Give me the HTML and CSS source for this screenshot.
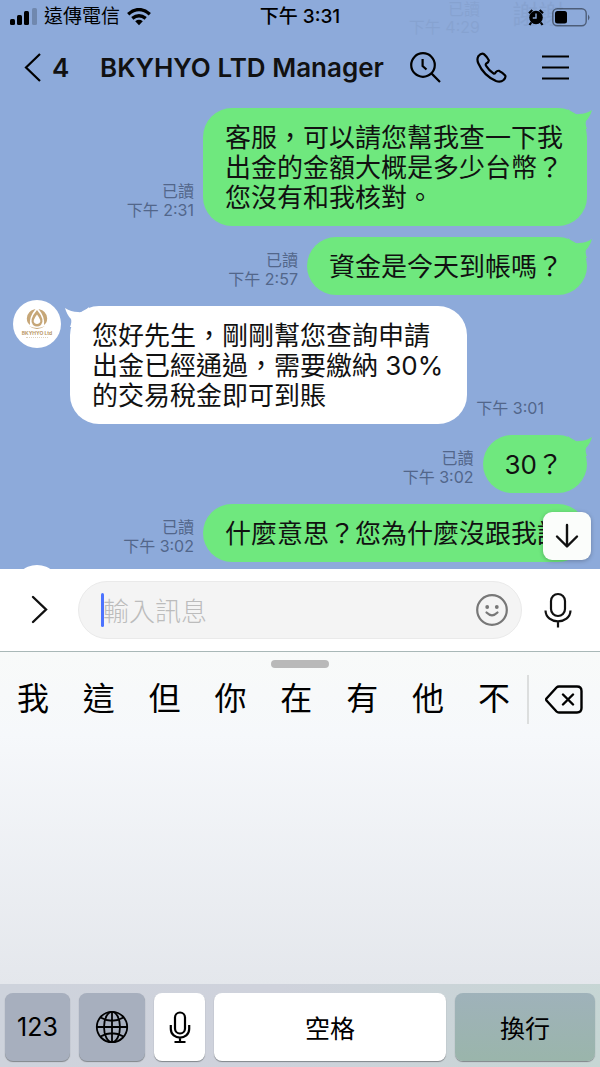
FILE: index.html
```html
<!DOCTYPE html>
<html lang="zh-Hant-TW">
<head>
<meta charset="utf-8">
<meta name="viewport" content="width=device-width, initial-scale=1">
<title>BKYHYO LTD Manager</title>
<link rel="stylesheet" href="styles.css">
</head>
<body>
<svg class="defs" width="0" height="0" aria-hidden="true">
  <symbol id="tail" viewBox="0 0 24 20"><path d="M0 0 Q5 6 11 5 Q18 5 24 1 Q22 8 18 12 Q17 15 19 20 L0 20 Z" fill="currentColor"/></symbol>
</svg>
<div class="phone">
  <header class="top">
    <div class="status">
      <div class="status-left">
        <svg width="27" height="18" viewBox="0 0 27 18" aria-hidden="true">
          <rect x="0" y="11" width="5" height="6" rx="1.5"/><rect x="7" y="7" width="5" height="10" rx="1.5"/><rect x="14" y="3" width="5" height="14" rx="1.5"/><rect x="22" y="0" width="5" height="17" rx="1.5" opacity=".2"/>
        </svg>
        <span>遠傳電信</span>
        <svg width="24" height="18" viewBox="0 0 24 18" fill="none" stroke="#000" stroke-width="3.4" aria-hidden="true">
          <path d="M1.2 6.2Q12-3 22.8 6.2"/><path d="M5.3 10.4Q12 5 18.7 10.4"/><path d="M8.2 13.3Q12 10.4 15.8 13.3L12 17.2Z" fill="#000" stroke="none"/>
        </svg>
      </div>
      <time class="clock">下午 3:31</time>
      <div class="status-right">
        <svg width="16" height="17" viewBox="0 0 16 17" aria-hidden="true">
          <circle cx="8" cy="8.5" r="6.8"/><path d="M1 4.2 4.3 1M15 4.2 11.7 1M3.2 13.5 1.5 16M12.8 13.5 14.5 16" stroke="#000" stroke-width="2.2"/><path d="M8 4.5V9H4.8" fill="none" stroke="#8daada" stroke-width="1.4"/>
        </svg>
        <svg width="38" height="19" viewBox="0 0 38 19" aria-hidden="true">
          <rect x=".8" y=".8" width="33.4" height="17" rx="4.5" fill="none" stroke="#000" stroke-opacity=".45" stroke-width="1.4"/><rect x="3" y="3" width="12" height="12.6" rx="2.5"/><path d="M36 6.5q3 3 0 6Z" opacity=".45"/>
        </svg>
      </div>
      <div class="ghost" aria-hidden="true"><p>已讀<br>下午 4:29</p><b>謝謝</b></div>
    </div>
    <nav class="nav">
      <button class="back" aria-label="返回">
        <svg width="17" height="29" viewBox="0 0 17 29" fill="none" stroke="#000" stroke-width="2.2"><path d="M16 1 2 14.5 16 28"/></svg>
        <span>4</span>
      </button>
      <h1>BKYHYO LTD Manager</h1>
      <div class="tools">
        <button aria-label="搜尋">
          <svg width="31" height="31" viewBox="0 0 31 31" fill="none" stroke="#000" stroke-width="2.2"><circle cx="13" cy="13" r="11.8"/><path d="M21.4 21.4 30 30M12.6 7V14L16.5 17.5"/></svg>
        </button>
        <button aria-label="通話">
          <svg width="31" height="31" viewBox="0 0 31 31" fill="none" stroke="#000" stroke-width="2.2" stroke-linejoin="round"><path d="M2.3 4.2Q5.5.6 8 2.2Q11 4.8 12.8 8.2Q13.2 10 10 11.8Q9.3 13 10.5 14.3Q13 18.3 17.4 21.4Q19 22 19.7 20.3Q21.5 18.3 23.2 18.9Q26.5 20.4 29.2 23.4Q30.2 25.3 27.6 28Q24.5 30.8 20 29Q7.5 23.3 2.3 11.2Q.6 7.4 2.3 4.2Z"/></svg>
        </button>
        <button aria-label="選單">
          <svg width="27" height="25" viewBox="0 0 27 25" stroke="#000" stroke-width="2.2"><path d="M0 1.5H27M0 12.5H27M0 23.5H27"/></svg>
        </button>
      </div>
    </nav>
  </header>

  <main class="chat">
    <article class="msg mine">
      <p class="meta">已讀<br>下午 2:31</p>
      <div class="bubble">客服，可以請您幫我查一下我<br>出金的金額大概是多少台幣？<br>您沒有和我核對。<svg class="tail" aria-hidden="true"><use href="#tail"/></svg></div>
    </article>
    <article class="msg mine">
      <p class="meta">已讀<br>下午 2:57</p>
      <div class="bubble">資金是今天到帳嗎？<svg class="tail" aria-hidden="true"><use href="#tail"/></svg></div>
    </article>
    <article class="msg theirs">
      <div class="avatar">
        <svg width="24" height="22" viewBox="0 0 24 22" fill="#c6a677" aria-hidden="true">
          <path d="M10.5 1Q2 3 1.8 10.5Q2 15 5 17Q3.8 9 10.5 1ZM13.5 1Q22 3 22.2 10.5Q22 15 19 17Q20.2 9 13.5 1Z"/>
          <path d="M12 2Q3.5 12 8 17Q12 20 16 17Q20.5 12 12 2ZM12 6.5Q17 13 14.5 15Q12 17 9.5 15Q7 13 12 6.5Z" fill-rule="evenodd"/>
          <path d="M4 18Q12 22 20 18Q12 24 4 18Z"/>
        </svg>
        <b>BKYHYO Ltd</b>
        <i></i>
      </div>
      <div class="bubble">您好先生，剛剛幫您查詢申請<br>出金已經通過，需要繳納 30%<br>的交易稅金即可到賬<svg class="tail" aria-hidden="true"><use href="#tail"/></svg></div>
      <p class="meta">下午 3:01</p>
    </article>
    <article class="msg mine">
      <p class="meta">已讀<br>下午 3:02</p>
      <div class="bubble">30？<svg class="tail" aria-hidden="true"><use href="#tail"/></svg></div>
    </article>
    <article class="msg mine">
      <p class="meta">已讀<br>下午 3:02</p>
      <div class="bubble">什麼意思？您為什麼沒跟我說</div>
    </article>
    <article class="msg theirs next"><div class="avatar"></div></article>
    <button class="jump" aria-label="最新訊息">
      <svg width="24" height="26" viewBox="0 0 24 26" fill="none" stroke="#111" stroke-width="2.4" stroke-linecap="round" stroke-linejoin="round"><path d="M12 2V23M2 13.5 12 23.5 22 13.5"/></svg>
    </button>
  </main>

  <form class="composer">
    <button type="button" aria-label="展開">
      <svg width="17" height="29" viewBox="0 0 17 29" fill="none" stroke="#111" stroke-width="2.4" stroke-linecap="round"><path d="M2 2 15 14.5 2 27"/></svg>
    </button>
    <div class="field">
      <span class="caret"></span>
      <input type="text" placeholder="輸入訊息" aria-label="輸入訊息">
      <button type="button" aria-label="表情貼">
        <svg width="34" height="34" viewBox="0 0 34 34" fill="none" stroke="#777" stroke-width="2.2"><circle cx="17" cy="17" r="14.8"/><path d="M11.5 19.5Q17 25 22.5 19.5" stroke-linecap="round"/><g fill="#777" stroke="none"><circle cx="12.2" cy="14" r="1.9"/><circle cx="21.8" cy="14" r="1.9"/></g></svg>
      </button>
    </div>
    <button type="button" aria-label="語音訊息">
      <svg width="28" height="36" viewBox="0 0 28 36" fill="none" stroke="#111" stroke-width="2.2"><rect x="7" y="2" width="14" height="22" rx="7"/><path d="M1.5 18.5C2 33 26 33 26.5 18.5M14 29.500V35.500"/></svg>
    </button>
  </form>

  <section class="keyboard">
    <div class="grip"></div>
    <div class="candidates">
      <button>我</button><button>這</button><button>但</button><button>你</button><button>在</button><button>有</button><button>他</button><button>不</button>
      <button class="delete" aria-label="刪除">
        <svg width="38" height="29" viewBox="0 0 38 29" fill="none" stroke="#000" stroke-width="2.4" stroke-linejoin="round" stroke-linecap="round"><path d="M14 1.5H32Q36.5 1.5 36.5 6V23Q36.5 27.5 32 27.5H14Q12.5 27.5 11.5 26.5L1.5 15.5Q.8 14.5 1.5 13.5L11.5 2.5Q12.5 1.5 14 1.5ZM18 9.5 28 19.5M28 9.5 18 19.5"/></svg>
      </button>
    </div>
    <div class="keys">
      <button class="gray">123</button>
      <button class="gray" aria-label="語言">
        <svg width="34" height="34" viewBox="0 0 34 34" fill="none" stroke="#000" stroke-width="1.8"><circle cx="17" cy="17" r="15.2"/><ellipse cx="17" cy="17" rx="8" ry="15.2"/><path d="M17 1.8V32.2M1.8 17H32.2M5.5 7.5Q17 14 28.5 7.5M5.5 26.5Q17 20 28.5 26.5"/></svg>
      </button>
      <button aria-label="聽寫">
        <svg width="22" height="33" viewBox="0 0 22 33" fill="none" stroke="#000" stroke-width="2.2"><rect x="6" y="1.5" width="10" height="21" rx="5"/><path d="M1.8 14V18C2 29.5 20 29.5 20.2 18V14M11 26.5V31M5.5 31H16.5"/></svg>
      </button>
      <button>空格</button>
      <button class="return">換行</button>
    </div>
  </section>
</div>
</body>
</html>
```
FILE: styles.css
```css
* { box-sizing: border-box; }

body {
  margin: 0;
  font-family: Inter, "Noto Sans CJK TC", sans-serif;
  color: #111;
}

button {
  margin: 0;
  padding: 0;
  border: 0;
  background: none;
  color: inherit;
  font: inherit;
}

svg { display: block; flex: none; }
p, h1 { margin: 0; }
.defs { position: absolute; }

.phone {
  display: flex;
  flex-direction: column;
  height: 100vh;
  overflow: hidden;
  background: #8daada;
}

/* Status bar and title bar */
.status {
  position: relative;
  display: grid;
  grid-template-columns: 1fr auto 1fr;
  align-items: center;
  height: 34px;
  padding: 0 10px;
  font-size: 19px;
  line-height: 34px;
  color: #000;
}
.status-left, .status-right { display: flex; align-items: center; gap: 8px; }
.status-left { gap: 7px; }
.status-right { justify-content: flex-end; }
.clock { font-weight: 500; }

.ghost {
  position: absolute;
  top: 0;
  right: 36px;
  display: flex;
  gap: 32px;
  font-size: 16px;
  line-height: 18px;
  text-align: right;
  white-space: nowrap;
  opacity: .04;
}
.ghost b { font-size: 26px; font-weight: 400; line-height: 30px; }

.nav {
  display: flex;
  align-items: center;
  height: 69px;
  padding: 0 31px 2px 24px;
}
.back {
  display: flex;
  align-items: center;
  gap: 11px;
  width: 76px;
  font-size: 26px;
  font-weight: 600;
}
.nav h1 { font-size: 26px; font-weight: 600; white-space: nowrap; }
.tools {
  display: flex;
  align-items: center;
  gap: 35px;
  margin-left: auto;
}

/* Conversation */
.chat {
  position: relative;
  display: flex;
  flex: 1;
  flex-direction: column;
  gap: 11px;
  min-height: 0;
  padding: 5px 13px 0;
  overflow: hidden;
}
.msg { display: flex; flex: none; align-items: flex-end; gap: 9px; }
.mine { justify-content: flex-end; }

.bubble {
  position: relative;
  padding: 15px 24px 13px 22px;
  border-radius: 29px;
  background: #6fe87e;
  font-size: 26px;
  line-height: 30px;
  white-space: nowrap;
}
.theirs .bubble { background: #fff; }

.tail {
  position: absolute;
  top: 1px;
  right: -5px;
  width: 24px;
  height: 20px;
  color: #6fe87e;
}
.theirs .tail {
  right: auto;
  left: -5px;
  color: #fff;
  transform: scaleX(-1);
}

.meta {
  padding-bottom: 6px;
  color: #52668a;
  font-size: 16px;
  line-height: 19px;
  text-align: right;
  white-space: nowrap;
}

.avatar {
  display: flex;
  flex: none;
  flex-direction: column;
  align-items: center;
  align-self: flex-start;
  width: 48px;
  height: 48px;
  margin-top: -6px;
  padding-top: 8px;
  border-radius: 50%;
  background: #fff;
  color: #b99866;
}
.avatar b { font-size: 5px; line-height: 7px; white-space: nowrap; }
.avatar i { width: 22px; border-top: 1px dotted #dfd2bd; }
.next .avatar { margin-top: -8px; }

.jump {
  position: absolute;
  right: 9px;
  bottom: 9px;
  display: grid;
  place-items: center;
  width: 48px;
  height: 48px;
  border-radius: 9px;
  background: #fbfdfb;
  box-shadow: 0 1px 4px rgba(0, 0, 0, .25);
}

/* Message composer */
.composer {
  display: flex;
  align-items: center;
  height: 82px;
  padding: 0 28px 0 31px;
  background: #fff;
}
.field {
  position: relative;
  display: flex;
  flex: 1;
  align-items: center;
  min-width: 0;
  height: 58px;
  margin: 0 22px 0 30px;
  padding: 0 12px 0 24px;
  border: 1px solid #eaeaea;
  border-radius: 29px;
  background: #f4f4f4;
}
.field input {
  flex: 1;
  min-width: 0;
  padding: 3px 0 0;
  border: 0;
  outline: 0;
  background: none;
  font: inherit;
  font-size: 26px;
}
.field input::placeholder { color: #bcbcbc; font-weight: 300; opacity: 1; }
.caret {
  position: absolute;
  left: 22px;
  width: 3px;
  height: 34px;
  border-radius: 2px;
  background: #4c73ff;
}

/* Keyboard */
.keyboard {
  display: flex;
  flex: none;
  flex-direction: column;
  height: 39vh;
  border-top: 1px solid #a9b8b7;
  background: linear-gradient(#f8faf9, #f6f8fb 20%, #e4e7ec 80%);
  color: #000;
}
.grip {
  align-self: center;
  width: 58px;
  height: 8px;
  margin: 8px 0 7px;
  border-radius: 4px;
  background: #b9b9b9;
}
.candidates {
  display: grid;
  grid-template-columns: repeat(8, 9fr) 10fr;
  height: 49px;
  font-size: 32px;
  line-height: 48px;
}
.delete {
  display: grid;
  place-items: center;
  border-left: 2px solid #dcdede;
}
.keys {
  display: grid;
  grid-template-columns: 65fr 66fr 51fr 232fr 140fr;
  gap: 9px;
  height: 83px;
  margin-top: auto;
  padding: 9px 5px 6px;
  background: linear-gradient(100deg, #ced3dc, #cfd2dc 45%, #c6d6d4);
  font-size: 25px;
}
.keys button {
  display: grid;
  place-items: center;
  border-radius: 8px;
  background: #fff;
  box-shadow: 0 1px 1px #80858a;
}
.keys .gray { background: #a7afbe; }
.keys .return { background: linear-gradient(#9fb2ba, #9ab5ab); }
```
